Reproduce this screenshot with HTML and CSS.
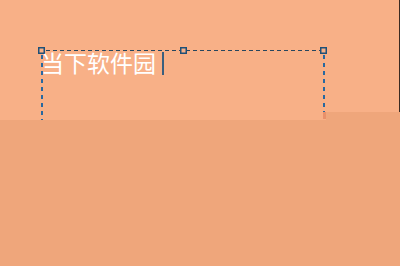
FILE: index.html
```html
<!DOCTYPE html>
<html>
<head>
<meta charset="utf-8">
<link rel="stylesheet" href="styles.css">
</head>
<body>
<div class="canvas">
  <div class="top">
    <div class="right-strip"></div>
  </div>
  <div class="bottom"></div>
  <div class="frame">
    <div class="frame-top"></div>
    <div class="frame-left"></div>
    <div class="frame-right"></div>
    <div class="handle h-left"></div>
    <div class="handle h-mid"></div>
    <div class="handle h-right"></div>
    <div class="tick"></div>
    <div class="text">当下软件园<span class="caret"></span></div>
  </div>
</div>
</body>
</html>
```
FILE: styles.css
```css
html, body { margin: 0; padding: 0; }
body { width: 400px; height: 266px; overflow: hidden; background: #efa67b; }
.canvas { position: relative; width: 400px; height: 266px; display: flex; flex-direction: column; }
.top { height: 120px; background: #f8b087; position: relative; }
.right-strip { position: absolute; right: 0; top: 0; width: 1px; height: 112px; background: #3a2a22; }
.bottom { flex: 1; background: #efa67b; }
.top::after { content: ""; position: absolute; left: 326px; right: 0; top: 112px; bottom: 0; background: #efa67b; }
.frame { position: absolute; left: 0; top: 0; width: 400px; height: 130px; }
.frame-top { position: absolute; left: 46px; width: 275px; top: 50px; height: 1px; background: repeating-linear-gradient(to right, #26465e 0 4px, transparent 4px 7px); }
.frame-left { position: absolute; left: 41px; top: 55px; height: 65px; width: 2px; background: repeating-linear-gradient(to bottom, #2868a0 0 4px, transparent 4px 8px); }
.frame-right { position: absolute; left: 323px; top: 55px; height: 57px; width: 2px; background: repeating-linear-gradient(to bottom, #2868a0 0 4px, transparent 4px 8px); }
.handle { position: absolute; top: 47px; width: 5px; height: 5px; border: 1px solid #1f5078; background: #f8b087; box-shadow: inset 0 0 0 0.5px #1f5078; }
.h-left { left: 38px; }
.h-mid { left: 180px; }
.h-right { left: 320px; }
.tick { position: absolute; left: 323px; top: 112px; width: 3px; height: 7px; background: #e8906a; }
.text { position: absolute; left: 41px; top: 46px; font-family: "Noto Sans CJK SC", sans-serif; font-size: 23px; line-height: 32px; color: #ffffff; display: flex; align-items: center; }
.caret { display: inline-block; width: 2px; height: 23px; background: #3a5f7e; margin-left: 6px; margin-top: 3px; }
```
